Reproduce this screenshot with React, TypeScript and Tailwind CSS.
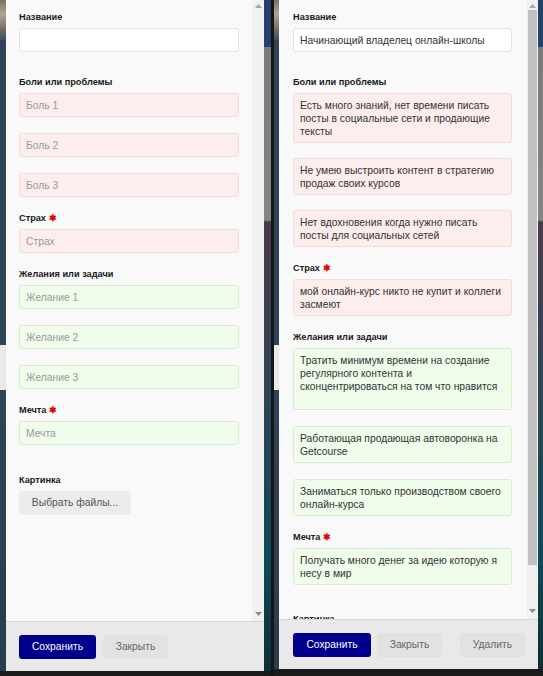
import React from "react";

const photoStrip =
  "bg-[linear-gradient(to_bottom,#7d6e63_0px,#b3a393_14px,#6f6a66_30px,#3a4f63_40px,#2f4356_41px,#2f4356_345px,#e9e9e9_345px,#e9e9e9_390px,#2f4356_390px,#2a3d4e_100%)]";
const bgStrip =
  "bg-[linear-gradient(to_bottom,#25406a_0px,#25406a_47px,#7a7a7a_47px,#858585_220px,#4a3a4a_222px,#2e4456_380px,#0d4a58_560px,#0f2e35_100%)]";

function Label({ text, req }: { text: string; req?: boolean }) {
  return (
    <div className="text-[9.2px] font-bold leading-[14px] text-[#1a1a1a] mb-[4px] flex items-center">
      <span>{text}</span>
      {req && <span className="ml-[3px] text-[#e00000] text-[9px] leading-[10px]">✱</span>}
    </div>
  );
}

type Tone = "white" | "pink" | "green";
const toneCls: Record<Tone, string> = {
  white: "bg-white border-[#e3e3e3]",
  pink: "bg-[#fdeded] border-[#f2dcdc]",
  green: "bg-[#effdea] border-[#d9ecd3]",
};

function Box({
  tone,
  text,
  placeholder,
  minH,
  className = "",
}: {
  tone: Tone;
  text?: string;
  placeholder?: string;
  minH?: string;
  className?: string;
}) {
  return (
    <div
      className={`border rounded-[3px] px-[6px] py-[4.5px] text-[10.3px] leading-[13px] ${toneCls[tone]} ${
        text ? "text-[#333]" : "text-[#9a9a9a]"
      } ${minH ?? "min-h-[24px]"} ${className}`}
    >
      {text ?? placeholder ?? "\u00a0"}
    </div>
  );
}

function ArrowUp() {
  return (
    <svg width="7" height="4" viewBox="0 0 7 4">
      <polygon points="3.5,0 7,4 0,4" fill="#a8a8a8" />
    </svg>
  );
}
function ArrowDown() {
  return (
    <svg width="7" height="4" viewBox="0 0 7 4">
      <polygon points="0,0 7,0 3.5,4" fill="#8a8a8a" />
    </svg>
  );
}

function Btn({ children, primary, w }: { children: React.ReactNode; primary?: boolean; w: string }) {
  return (
    <div
      className={`${w} h-[24px] rounded-[3px] flex items-center justify-center text-[10.3px] ${
        primary ? "bg-[#00008c] text-white" : "bg-[#e2e2e2] text-[#666]"
      }`}
    >
      {children}
    </div>
  );
}

function LeftPanel() {
  return (
    <div className="w-[258px] h-[671px] bg-[#f9f9f9] flex flex-col shrink-0">
      <div className="flex-1 flex min-h-0">
        <div className="flex-1 overflow-hidden px-[13px] pt-[10px]">
          <Label text="Название" />
          <Box tone="white" />
          <div className="mt-[23px]">
            <Label text="Боли или проблемы" />
            <Box tone="pink" placeholder="Боль 1" />
            <Box tone="pink" placeholder="Боль 2" className="mt-[16px]" />
            <Box tone="pink" placeholder="Боль 3" className="mt-[16px]" />
          </div>
          <div className="mt-[14px]">
            <Label text="Страх" req />
            <Box tone="pink" placeholder="Страх" />
          </div>
          <div className="mt-[14px]">
            <Label text="Желания или задачи" />
            <Box tone="green" placeholder="Желание 1" />
            <Box tone="green" placeholder="Желание 2" className="mt-[16px]" />
            <Box tone="green" placeholder="Желание 3" className="mt-[16px]" />
          </div>
          <div className="mt-[14px]">
            <Label text="Мечта" req />
            <Box tone="green" placeholder="Мечта" />
          </div>
          <div className="mt-[28px]">
            <Label text="Картинка" />
            <div className="w-[112px] h-[24px] rounded-[3px] bg-[#ececec] text-[#555] text-[10.3px] flex items-center justify-center">
              Выбрать файлы...
            </div>
          </div>
        </div>
        <div className="w-[12px] bg-[#f1f1f1] flex flex-col justify-between items-center pt-[4px] pb-[5px]">
          <ArrowUp />
          <ArrowDown />
        </div>
      </div>
      <div className="h-[50px] border-t border-[#d6d6d6] bg-[#e9e9e9] pl-[13px] pt-[13px] flex gap-[7px]">
        <Btn primary w="w-[77px]">Сохранить</Btn>
        <Btn w="w-[65px]">Закрыть</Btn>
      </div>
    </div>
  );
}

function RightPanel() {
  return (
    <div className="w-[259px] h-[669px] bg-[#f9f9f9] flex flex-col shrink-0">
      <div className="flex-1 flex min-h-0">
        <div className="flex-1 overflow-hidden pl-[14px] pr-[15px] pt-[10px]">
          <Label text="Название" />
          <Box tone="white" text="Начинающий владелец онлайн-школы" />
          <div className="mt-[23px]">
            <Label text="Боли или проблемы" />
            <Box tone="pink" text="Есть много знаний, нет времени писать посты в социальные сети и продающие тексты" />
            <Box tone="pink" text="Не умею выстроить контент в стратегию продаж своих курсов" className="mt-[15px]" />
            <Box tone="pink" text="Нет вдохновения когда нужно писать посты для социальных сетей" className="mt-[15px]" />
          </div>
          <div className="mt-[14px]">
            <Label text="Страх" req />
            <Box tone="pink" text="мой онлайн-курс никто не купит и коллеги засмеют" />
          </div>
          <div className="mt-[14px]">
            <Label text="Желания или задачи" />
            <Box
              tone="green"
              minH="min-h-[62px]"
              text="Тратить минимум времени на создание регулярного контента и сконцентрироваться на том что нравится"
            />
            <Box tone="green" text="Работающая продающая автоворонка на Getcourse" className="mt-[16px]" />
            <Box tone="green" text="Заниматься только производством своего онлайн-курса" className="mt-[16px]" />
          </div>
          <div className="mt-[14px]">
            <Label text="Мечта" req />
            <Box tone="green" text="Получать много денег за идею которую я несу в мир" />
          </div>
          <div className="mt-[27px]">
            <Label text="Картинка" />
          </div>
        </div>
        <div className="w-[11px] bg-[#f1f1f1] flex flex-col items-center pt-[4px] pb-[6px]">
          <ArrowUp />
          <div className="w-[9px] h-[555px] bg-[#c1c1c1] mt-[2px]" />
          <div className="flex-1" />
          <ArrowDown />
        </div>
      </div>
      <div className="h-[50px] border-t border-[#d6d6d6] bg-[#e9e9e9] pl-[14px] pr-[13px] pt-[13px] flex gap-[6px]">
        <Btn primary w="w-[78px]">Сохранить</Btn>
        <Btn w="w-[65px]">Закрыть</Btn>
        <div className="ml-auto">
          <Btn w="w-[65px]">Удалить</Btn>
        </div>
      </div>
    </div>
  );
}

export default function App() {
  return (
    <div
      className="w-[543px] h-[676px] bg-[#1a1a1a] flex items-start overflow-hidden"
      style={{ fontFamily: '"Liberation Sans", Arial, sans-serif' }}
    >
      <div className={`w-[6px] h-[671px] shrink-0 ${photoStrip}`} />
      <LeftPanel />
      <div className={`w-[7px] h-[671px] shrink-0 ${bgStrip}`} />
      <div className="w-[3px] h-[676px] shrink-0 bg-[#151515]" />
      <div className={`w-[5px] h-[669px] shrink-0 ${photoStrip}`} />
      <RightPanel />
      <div className={`w-[5px] h-[669px] shrink-0 ${bgStrip}`} />
    </div>
  );
}
